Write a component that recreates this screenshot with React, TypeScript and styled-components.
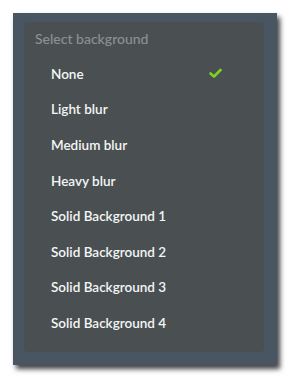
import React from 'react';
import styled, { createGlobalStyle } from 'styled-components';

const GlobalStyle = createGlobalStyle`
  html, body {
    margin: 0;
    padding: 0;
    background: #ffffff;
  }
  body {
    font-family: Lato, 'Open Sans', sans-serif;
  }
`;

const Page = styled.div`
  width: 300px;
  height: 389px;
  padding: 13px 0 0 13px;
  box-sizing: border-box;
`;

const Frame = styled.div`
  width: 264px;
  height: 352px;
  box-sizing: border-box;
  padding: 9px 13px 13px 11px;
  background: #4a5563;
  box-shadow: 3px 4px 5px rgba(0, 0, 0, 0.75);
`;

const Panel = styled.div`
  height: 100%;
  box-sizing: border-box;
  background: #4a5052;
  border-radius: 4px;
  padding: 8px 0 0 11px;
  display: flex;
  flex-direction: column;
`;

const Heading = styled.div`
  color: #8c9090;
  font-size: 14px;
  font-weight: 500;
  line-height: 18px;
  margin-bottom: 8px;
`;

const Option = styled.div`
  display: flex;
  align-items: center;
  justify-content: space-between;
  height: 35.6px;
  padding: 0 42px 0 16px;
  color: #f4f6f6;
  font-size: 13.5px;
  font-weight: 600;
`;

const Check = () => (
  <svg width="13" height="11" viewBox="0 0 13 11">
    <path d="M1.5 5.5 L5 8.5 L11.5 2" fill="none" stroke="#7ed321" strokeWidth="2.6" strokeLinecap="round" strokeLinejoin="round" />
  </svg>
);

const options = [
  'None',
  'Light blur',
  'Medium blur',
  'Heavy blur',
  'Solid Background 1',
  'Solid Background 2',
  'Solid Background 3',
  'Solid Background 4',
];

export default function App() {
  const selected = 'None';
  return (
    <Page>
      <GlobalStyle />
      <Frame>
        <Panel>
          <Heading>Select background</Heading>
          {options.map((o) => (
            <Option key={o}>
              <span>{o}</span>
              {o === selected && <Check />}
            </Option>
          ))}
        </Panel>
      </Frame>
    </Page>
  );
}
